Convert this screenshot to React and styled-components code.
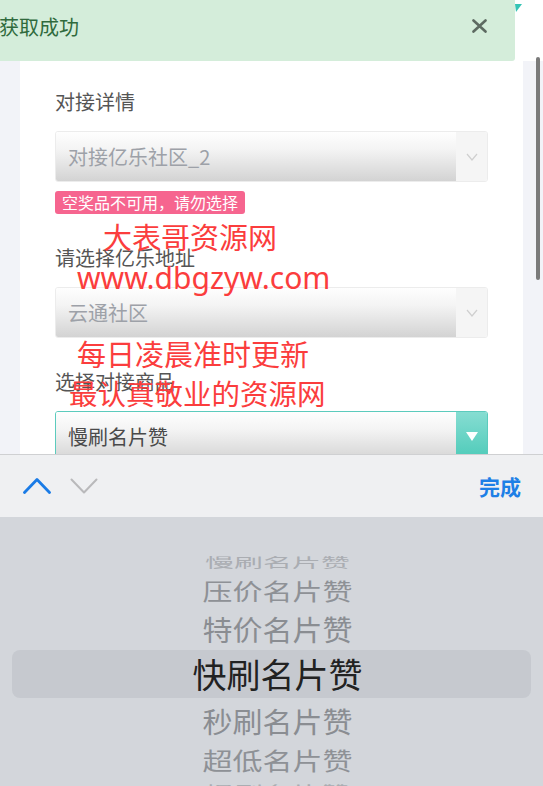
import React from 'react'
import styled, { createGlobalStyle } from 'styled-components'

const GlobalStyle = createGlobalStyle`
  html, body {
    margin: 0;
    padding: 0;
    background: #f2f3f8;
    font-family: "Noto Sans CJK SC", "Noto Sans", sans-serif;
  }
  * { box-sizing: border-box; }
`

const Screen = styled.div`
  position: relative;
  width: 543px;
  height: 786px;
  overflow: hidden;
  display: flex;
  flex-direction: column;
  background: #f2f3f8;
`

const TopBar = styled.div`
  position: relative;
  height: 61px;
  flex-shrink: 0;
  background: #fff;
`

const Corner = styled.svg`
  position: absolute;
  top: 4px;
  left: 515px;
`

const Body = styled.div`
  flex: 1;
  padding: 0 20px;
`

const Card = styled.div`
  background: #fff;
  height: 100%;
  padding: 27px 35px 0;
`

const Group = styled.div`
  & + & {
    margin-top: 30px;
  }
`

const Label = styled.div`
  font-size: 20px;
  line-height: 28px;
  color: #555;
  margin-bottom: 15px;
`

const Select = styled.div`
  display: flex;
  height: 51px;
  border: 1px solid ${p => (p.$active ? '#5ccbbd' : '#ececec')};
  border-radius: 3px;
  overflow: hidden;
`

const SelectValue = styled.div`
  flex: 1;
  display: flex;
  align-items: center;
  padding-left: 12px;
  font-size: 20px;
  color: ${p => (p.$active ? '#4a4a4a' : '#9da1a8')};
  background: linear-gradient(#fefefe 0%, #f4f4f4 35%, #d3d3d3 100%);
`

const SelectArrow = styled.div`
  width: 31px;
  display: flex;
  align-items: center;
  justify-content: center;
  background: ${p => (p.$active ? 'linear-gradient(#86ddd2, #4ccab8)' : '#f5f5f5')};
`

const Badge = styled.div`
  display: inline-block;
  margin-top: 9px;
  height: 23px;
  padding: 0 7px;
  border-radius: 3px;
  background: #f6658f;
  color: #fff;
  font-size: 16px;
  line-height: 23px;
`

const Toast = styled.div`
  position: absolute;
  top: 0;
  left: 0;
  width: 515px;
  height: 61px;
  background: #d4edda;
  border-bottom-right-radius: 3px;
  display: flex;
  align-items: center;
  justify-content: space-between;
  padding: 0 28px 0 0;
  font-size: 20px;
  color: #2f6a3c;
`

const ToastText = styled.span`
  margin-left: -1px;
  margin-top: -8px;
`

const CloseIcon = styled.svg`
  margin-top: -10px;
`

const Scrollbar = styled.div`
  position: absolute;
  top: 57px;
  left: 536px;
  width: 4px;
  height: 223px;
  border-radius: 2px;
  background: #7a7a7a;
`

const Watermark = styled.div`
  position: absolute;
  top: ${p => p.$top}px;
  left: ${p => p.$left}px;
  font-size: ${p => p.$size}px;
  line-height: 1;
  color: #fb3d3d;
  white-space: nowrap;
  font-family: "Noto Sans", "Noto Sans CJK SC", sans-serif;
`

const Keyboard = styled.div`
  position: absolute;
  left: 0;
  right: 0;
  bottom: 0;
  height: 332px;
  display: flex;
  flex-direction: column;
`

const Toolbar = styled.div`
  height: 63px;
  flex-shrink: 0;
  border-top: 1px solid #cfd0d2;
  background: #eff0f2;
  display: flex;
  align-items: center;
  padding: 0 22px 0 23px;
  gap: 19px;
`

const Done = styled.span`
  margin-left: auto;
  font-size: 21px;
  font-weight: 600;
  color: #1d7fe6;
`

const Wheel = styled.div`
  flex: 1;
  background: #d3d6db;
  padding-top: 33px;
  display: flex;
  flex-direction: column;
`

const WheelRow = styled.div`
  height: ${p => p.$h}px;
  margin: 0 12px;
  padding-left: 12px;
  flex-shrink: 0;
  display: flex;
  align-items: center;
  justify-content: center;
  border-radius: 8px;
  background: ${p => (p.$selected ? '#c6c9cf' : 'transparent')};
`

const WheelText = styled.span`
  display: inline-block;
  font-size: ${p => p.$size}px;
  line-height: 1;
  color: ${p => p.$color};
  transform: scaleY(${p => p.$squash});
  white-space: nowrap;
`

const Chevron = ({ dir, color, width }) => (
  <svg width='28' height='16' viewBox='0 0 28 16'>
    <polyline
      points={dir === 'up' ? '1.5,14.5 14,1.5 26.5,14.5' : '1.5,1.5 14,14.5 26.5,1.5'}
      fill='none'
      stroke={color}
      strokeWidth={width}
      strokeLinecap='round'
      strokeLinejoin='round'
    />
  </svg>
)

const SmallChevron = () => (
  <svg width='12' height='8' viewBox='0 0 12 8'>
    <polyline points='1,1 6,7 11,1' fill='none' stroke='#cfcfcf' strokeWidth='1.2' />
  </svg>
)

const FilledArrow = () => (
  <svg width='12' height='9' viewBox='0 0 12 9'>
    <polygon points='0,0 12,0 6,9' fill='#fff' />
  </svg>
)

const wheelItems = [
  { text: '慢刷名片赞', h: 22, size: 29, squash: 0.45, color: '#aaadb2' },
  { text: '压价名片赞', h: 36, size: 30, squash: 0.76, color: '#8e9196' },
  { text: '特价名片赞', h: 42, size: 30, squash: 0.93, color: '#8a8d92' },
  { text: '快刷名片赞', h: 48, size: 34, squash: 1, color: '#222', selected: true },
  { text: '秒刷名片赞', h: 46, size: 30, squash: 0.93, color: '#8a8d92' },
  { text: '超低名片赞', h: 32, size: 30, squash: 0.8, color: '#8e9196' },
  { text: '慢刷名片赞', h: 28, size: 29, squash: 0.5, color: '#aaadb2' }
]

export default function App () {
  return (
    <Screen>
      <GlobalStyle />
      <TopBar>
        <Corner width='7' height='8' viewBox='0 0 7 8'>
          <polygon points='0,0 7,0 1,8' fill='#35c4b4' />
        </Corner>
      </TopBar>

      <Body>
        <Card>
          <Group>
            <Label>对接详情</Label>
            <Select>
              <SelectValue>对接亿乐社区_2</SelectValue>
              <SelectArrow><SmallChevron /></SelectArrow>
            </Select>
            <Badge>空奖品不可用，请勿选择</Badge>
          </Group>
          <Group>
            <Label>请选择亿乐地址</Label>
            <Select>
              <SelectValue>云通社区</SelectValue>
              <SelectArrow><SmallChevron /></SelectArrow>
            </Select>
          </Group>
          <Group>
            <Label>选择对接商品</Label>
            <Select $active>
              <SelectValue $active>慢刷名片赞</SelectValue>
              <SelectArrow $active><FilledArrow /></SelectArrow>
            </Select>
          </Group>
        </Card>
      </Body>

      <Toast>
        <ToastText>获取成功</ToastText>
        <CloseIcon width='15' height='14' viewBox='0 0 15 14'>
          <path d='M1.5 1.5 L13.5 12.5 M13.5 1.5 L1.5 12.5' stroke='#5d6a61' strokeWidth='2.6' strokeLinecap='round' />
        </CloseIcon>
      </Toast>

      <Scrollbar />

      <Watermark $top={223} $left={103} $size={29}>大表哥资源网</Watermark>
      <Watermark $top={263} $left={77} $size={30}>www.dbgzyw.com</Watermark>
      <Watermark $top={340} $left={77} $size={29}>每日凌晨准时更新</Watermark>
      <Watermark $top={380} $left={69} $size={28.5}>最认真敬业的资源网</Watermark>

      <Keyboard>
        <Toolbar>
          <Chevron dir='up' color='#1a7be6' width={2.8} />
          <Chevron dir='down' color='#b9b9bb' width={2} />
          <Done>完成</Done>
        </Toolbar>
        <Wheel>
          {wheelItems.map((item, i) => (
            <WheelRow key={i} $h={item.h} $selected={item.selected}>
              <WheelText $size={item.size} $squash={item.squash} $color={item.color}>
                {item.text}
              </WheelText>
            </WheelRow>
          ))}
        </Wheel>
      </Keyboard>
    </Screen>
  )
}
